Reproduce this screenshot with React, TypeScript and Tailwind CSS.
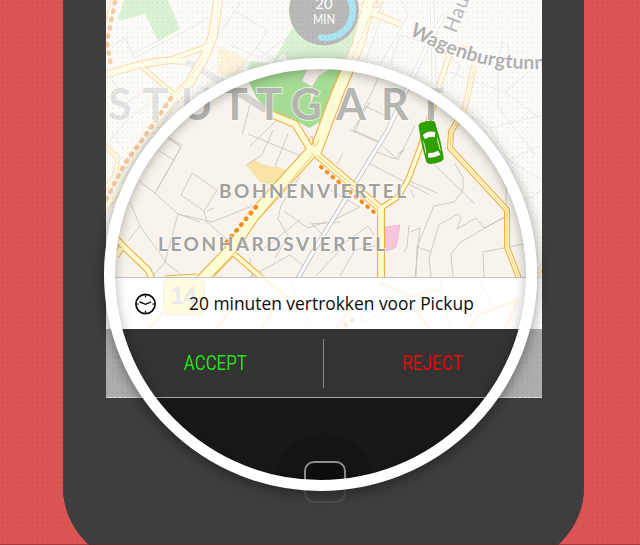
const minorStreets = [
  "M155 130L181 147L155 193M158 150L175 161M139 181L155 193L178 214L212 222L262 202M178 214L165 262L184 277M165 262L152 277M192 173L217 190L204 211L181 195ZM204 211L207 222L233 245M207 211L214 208M130 202L140 226L128 241M140 226L166 262",
  "M248 134L308 159M273 130L262 155L247 165M288 134L275 166M300 176L281 205L278 219L288 236L275 258M284 211L308 228L326 222M312 224L322 234M250 258L252 278M250 277L290 255L306 268M262 250L300 220M310 224L340 222",
  "M370 164L430 195M374 151L395 159L404 150L397 154M378 142L398 160L415 125M343 153L337 164M350 130L378 142M433 163L475 204M405 179L437 193M411 190L414 198M455 164L463 178V190L454 202L434 206L417 247L431 252M417 247L416 277",
  "M409 225L407 247L404 252M410 232L420 228L415 277M504 217L461 242L451 254L453 277M504 218L484 228L476 218L457 229L461 218L458 214L439 225L429 258L431 277M524 244L483 252L484 277M506 185V216M330 254L368 226L374 235M340 276L355 250L378 245M316 276L340 250M330 190L360 207L330 222",
  "M355 132L365 106L390 118M365 106L380 75M370 102L353 130L378 141M250 146L276 121M242 135L250 105M165 135L182 145",
  "M108 48L125 38L134 58L209 18M125 38L128 40M134 53L165 37M209 50L240 3M233 10L267 30L258 46L229 80M285 38L282 53L307 65M285 38L260 58L230 45M255 47L290 70",
  "M380 65L408 15L401 0M390 66L400 35L430 44M366 60L384 10M449 72L505 92L540 62M498 68V107L535 155M502 42L497 65L510 58L508 45L502 42M505 92L542 120M455 106L490 128L542 115M490 128L508 160L542 180M508 160L542 145M515 207L542 190M445 50L460 66L450 87",
  "M106 145L129 118L150 103M106 125L125 151M108 75L132 105M118 108L156 85M160 130L181 147L157 190M178 214L200 222",
];

const greys = minorStreets.join("");

const yellowRoads: { d: string; w: number }[] = [
  { d: "M218 0L213 36L205 56L190 82L175 99L150 133L121 183L104 208", w: 9 },
  { d: "M104 75L142 64L172 60L185 61", w: 7 },
  { d: "M172 59L208 46", w: 5 },
  { d: "M142 67L175 95", w: 4 },
  { d: "M113 0L104 36M104 145L118 158L115 175L104 190", w: 4 },
  { d: "M268 113L295 124L311 150", w: 7 },
  { d: "M371 -3L358 45L338 92L315 153", w: 12 },
  { d: "M355 5L374 14L400 24", w: 6 },
  { d: "M380 0L374 16", w: 6 },
  { d: "M314 149L253 216L229 252L201 281", w: 12 },
  { d: "M233 253L264 280", w: 5 },
  { d: "M316 154L381 209L381 280", w: 7 },
  { d: "M381 208L398 197L408 180L420 148L433 107L440 83L450 53", w: 5 },
  { d: "M446 56L449 50L467 48", w: 3 },
  { d: "M474 66L465 108L451 132L450 148L507 210L507 247L520 281", w: 5 },
  { d: "M114 236L125 248L148 270L153 281M116 256L121 248", w: 6 },
  { d: "M165 279L197 277", w: 6 },
  { d: "M537 277L543 264", w: 3 },
];

const serviceRoads =
  "M317 155L379 208M312 156L264 212M372 12L348 68M228 262L214 274M211 278L240 247M308 142L312 136L314 146M319 140L315 147M204 58L178 94M311 153L316 157";

const sheetRoads =
  "M150 329L172 300L205 283M215 329L245 296M262 329L272 310M262 277L300 308M335 329L350 310M470 329L478 315L518 300L505 329M415 310L430 329M378 282L410 296L440 290";

function CityMap() {
  return (
    <svg viewBox="106 0 436 329" className="block h-[329px] w-[436px]" fill="none">
      <rect x="106" width="436" height="329" fill="#f8f4ed" />
      <g fill="#a5dd95">
        <path d="M118 18L124 0H168L180 29L158 41L145 14L119 21Z" />
        <path d="M249 61L272 64L284 42L292 29L360 20L350 50L338 80L329 98L320 122L309 128L295 120L268 110L256 97L248 80Z" />
      </g>
      <path d="M308 66L302 81L312 87L319 76L332 68L325 64ZM311 86L316 92L310 106ZM275 62L283 53L288 60Z" fill="#f3ebe4" stroke="#cdbfb8" strokeWidth=".6" />
      <path d="M219 46L248 60L237 78L217 74ZM246 165L254 159L260 163L273 167L277 166L288 171L272 186L260 182Z" fill="#f8e3a8" />
      <path d="M385 227L400 225L396 247L385 252Z" fill="#f8c6dc" stroke="#e8a5c5" strokeWidth=".6" />
      <path d="M186 62L222 82L266 110" stroke="#d5d3cd" strokeWidth="7" />
      <path d={greys} stroke="#c4c2bc" strokeWidth=".8" />
      <path d="M444 15L427 46L388 130L310 257L297 280M432 0L434 85" stroke="#b9b9bc" strokeWidth="4.6" />
      <path d="M444 15L427 46L388 130L310 257L297 280M432 0L434 85" stroke="#fcfcfc" strokeWidth="3.2" />

      <g strokeLinejoin="round">
        {yellowRoads.map((r) => (
          <path key={r.d} d={r.d} stroke="#f0ae40" strokeWidth={r.w + 1} />
        ))}
        {yellowRoads.map((r) => (
          <path key={r.d} d={r.d} stroke="#fefcd2" strokeWidth={r.w - 1.2} />
        ))}
      </g>
      <path d="M474 66L465 108L451 132L450 148L507 210L507 247L520 281" stroke="#f5c368" strokeWidth=".8" />
      <path d={serviceRoads} stroke="#f2b95a" strokeWidth=".9" />
      <path d="M178 100L152 134L122 184" stroke="#dfdccb" strokeWidth="3" />
      <circle cx="376" cy="5" r="3" fill="#e9e5df" stroke="#eead42" />

      <g stroke="#fff" strokeWidth="6" strokeLinecap="round" opacity=".6">
        <path d="M171 98L148 132L125 163L108 197M256 207L233 235M321 167L375 213M115 2L107 42L111 66" />
      </g>
      <g stroke="#f98e1f" strokeLinecap="round">
        <path d="M171 98L148 132L125 163L106 200M115 2L107 42L111 66" strokeWidth="4.400" stroke="#f47a10" strokeDasharray="1.6 6.9" />
        <path d="M256 207L226 243" strokeWidth="4.400" strokeDasharray=".8 6.7" />
        <path d="M321 167L375 213" strokeWidth="4.200" strokeDasharray=".8 6.800" />
      </g>

      <g fill="#a1a19d" stroke="#fff" strokeOpacity=".6" strokeWidth="2" paintOrder="stroke" className="font-['Lato'] font-bold">
        <text x="108 142.500 181 222 256.500 290.500 336 381 418" y="119.500" fontSize="43" fill="#b6b6b1">STUTTGART</text>
        <text x="219" y="197.700" fontSize="19" textLength="187">BOHNENVIERTEL</text>
        <text x="158" y="251" fontSize="19" textLength="227">LEONHARDSVIERTEL</text>
      </g>
      <path id="tunnel" d="M409 34Q455 61 500 67T590 62" />
      <g fill="#3a3a3c" stroke="#fff" strokeOpacity=".7" strokeWidth="2" paintOrder="stroke" className="font-['Lato'] font-bold">
        <text fontSize="19.500" letterSpacing="0.2"><textPath href="#tunnel">Wagenburgtunnel</textPath></text>
        <text transform="translate(456 34) rotate(-69)" fontSize="20" letterSpacing=".6" fill="#58585c" className="font-medium">Hau</text>
      </g>

      <g transform="translate(431 142.500) rotate(-13)">
        <path d="M-8.500 -18Q-8.500 -21 -4.500 -21.500Q0 -22 4.500 -21.500Q8.500 -21 8.500 -18L9.500 0L9 17Q9 20 5 21Q0 22 -5 21Q-9 20 -9 17L-9.500 0Z" fill="#2fa000" />
        <path d="M-6.500 -9Q0 -13 6.500 -9L5 -4.500Q0 -6.500 -5 -4.500ZM-5 9.500Q0 11 5 9.500L6.500 14Q0 16 -6.500 14Z" fill="#fff" />
        <path d="M-7.600 -5L-6.500 0L-6.700 8L-7.800 11ZM7.600 -5L6.500 0L6.700 8L7.800 11Z" fill="#d8ecd0" />
      </g>

      <g>
        <circle cx="324" cy="10.500" r="35" fill="#50544f" />
        <path d="M345 -8A27 27 0 0 1 321 37.500" stroke="#2dbbe0" strokeWidth="6.500" strokeLinecap="round" />
        <g fill="#fff" textAnchor="middle" className="font-['Lato']">
          <text x="324" y="8.500" fontSize="15">20</text>
          <text x="324" y="24" fontSize="13" textLength="22" lengthAdjust="spacingAndGlyphs">MIN</text>
        </g>
      </g>

      <rect x="106" y="277" width="436" height="52" fill="#fff" />
      <path d={sheetRoads} stroke="#fef7ec" strokeWidth="3" />
      <path d="M218 320L240 290L270 325M290 280L310 325M345 285L365 322L400 300M440 282L450 325M480 282L495 310" stroke="#f8f7f5" />
      <circle cx="352" cy="320" r="2.500" fill="#fdeade" />
      <circle cx="346" cy="325" r="2.500" fill="#fdeade" />
      <rect x="164" y="279" width="40" height="35.500" rx="5" fill="#fffce0" stroke="#f8f6e6" strokeWidth="2" />
      <text x="171" y="304" fontSize="23" fill="#e9e9ec" className="font-['Liberation_Sans'] font-bold">14</text>
      <path d="M106 277.500H542" stroke="#c6c4c0" />
    </svg>
  );
}

function ClockIcon() {
  return (
    <svg viewBox="0 0 22 22" className="size-[22px]" fill="none" stroke="#0a0a0a" strokeLinecap="round">
      <circle cx="11.500" cy="11" r="9.600" strokeWidth="1.7" />
      <path d="M11.500 2.500V4M11.500 18V19.500M3 11H4.500M18.500 11H20" strokeWidth="1.2" />
      <path d="M6 9L11.500 11.300L16.500 9.200" strokeWidth="1.4" />
    </svg>
  );
}

function PickupNotice() {
  return (
    <div className="absolute bottom-[69px] left-0 flex h-[51px] w-full items-center pl-[28px]">
      <ClockIcon />
      <span className="ml-[33px] whitespace-nowrap font-['Open_Sans',sans-serif] text-[17.400px] leading-none text-[#0c0c0c]">
        20 minuten vertrokken voor Pickup
      </span>
    </div>
  );
}

function ActionBar() {
  return (
    <div className="flex h-[69px] items-center border-b border-[#a8a8a8] bg-[#333333] font-['Roboto',sans-serif] text-[21px] font-normal leading-none">
      <button className="flex w-[217px] justify-center pl-[2px] pt-px text-[#1fe610]">
        <span className="origin-center scale-x-[0.8]">ACCEPT</span>
      </button>
      <span className="h-[49px] w-px bg-[#858585]" />
      <button className="flex w-[218px] justify-center pt-px text-[#f00808]">
        <span className="origin-center scale-x-[0.82]">REJECT</span>
      </button>
    </div>
  );
}

function HomeButton() {
  return (
    <div className="ml-[211px] mt-[35px] flex size-[98px] items-center justify-center rounded-full bg-[#141414]">
      <div className="ml-px size-[42px] rounded-[10px] border-2 border-[#8e8e8e] bg-[#0e0e0e]" />
    </div>
  );
}

export default function App() {
  return (
    <main className="relative flex h-[545px] w-[640px] justify-center overflow-hidden bg-[#dc5555]">
      <section className="relative ml-[7px] h-[564px] w-[521px] shrink-0 rounded-b-[77px] border-x border-[#333] bg-[#181818]">
        <div className="relative ml-[42px] w-[436px]">
          <CityMap />
          <ActionBar />
          <PickupNotice />
        </div>
        <HomeButton />
      </section>

      {/* Everything outside the magnifier is faded back. */}
      <div className="absolute inset-0 [mask-image:radial-gradient(circle_at_320.500px_274.500px,transparent_210px,black_211px)]">
        <div className="absolute left-[63px] top-0 h-[564px] w-[521px] rounded-b-[77px] bg-[#454545]/85 [clip-path:polygon(0_0,43px_0,43px_398px,479px_398px,479px_0,100%_0,100%_100%,0_100%)]" />
        <div className="absolute left-[106px] top-0 h-[398px] w-[436px] bg-white/60" />
        <div className="absolute inset-0 bg-[radial-gradient(rgba(0,0,0,0.11)_0.6px,transparent_0.9px)] bg-[size:5px_5px]" />
      </div>

      <div className="absolute left-[104px] top-[58px] size-[433px] rounded-full border-[11px] border-white shadow-[0_3px_14px_rgba(0,0,0,0.4),inset_0_2px_12px_rgba(0,0,0,0.3)]" />
      <div className="absolute bottom-0 left-0 h-px w-full bg-[#7a1c1c]/50" />
    </main>
  );
}
